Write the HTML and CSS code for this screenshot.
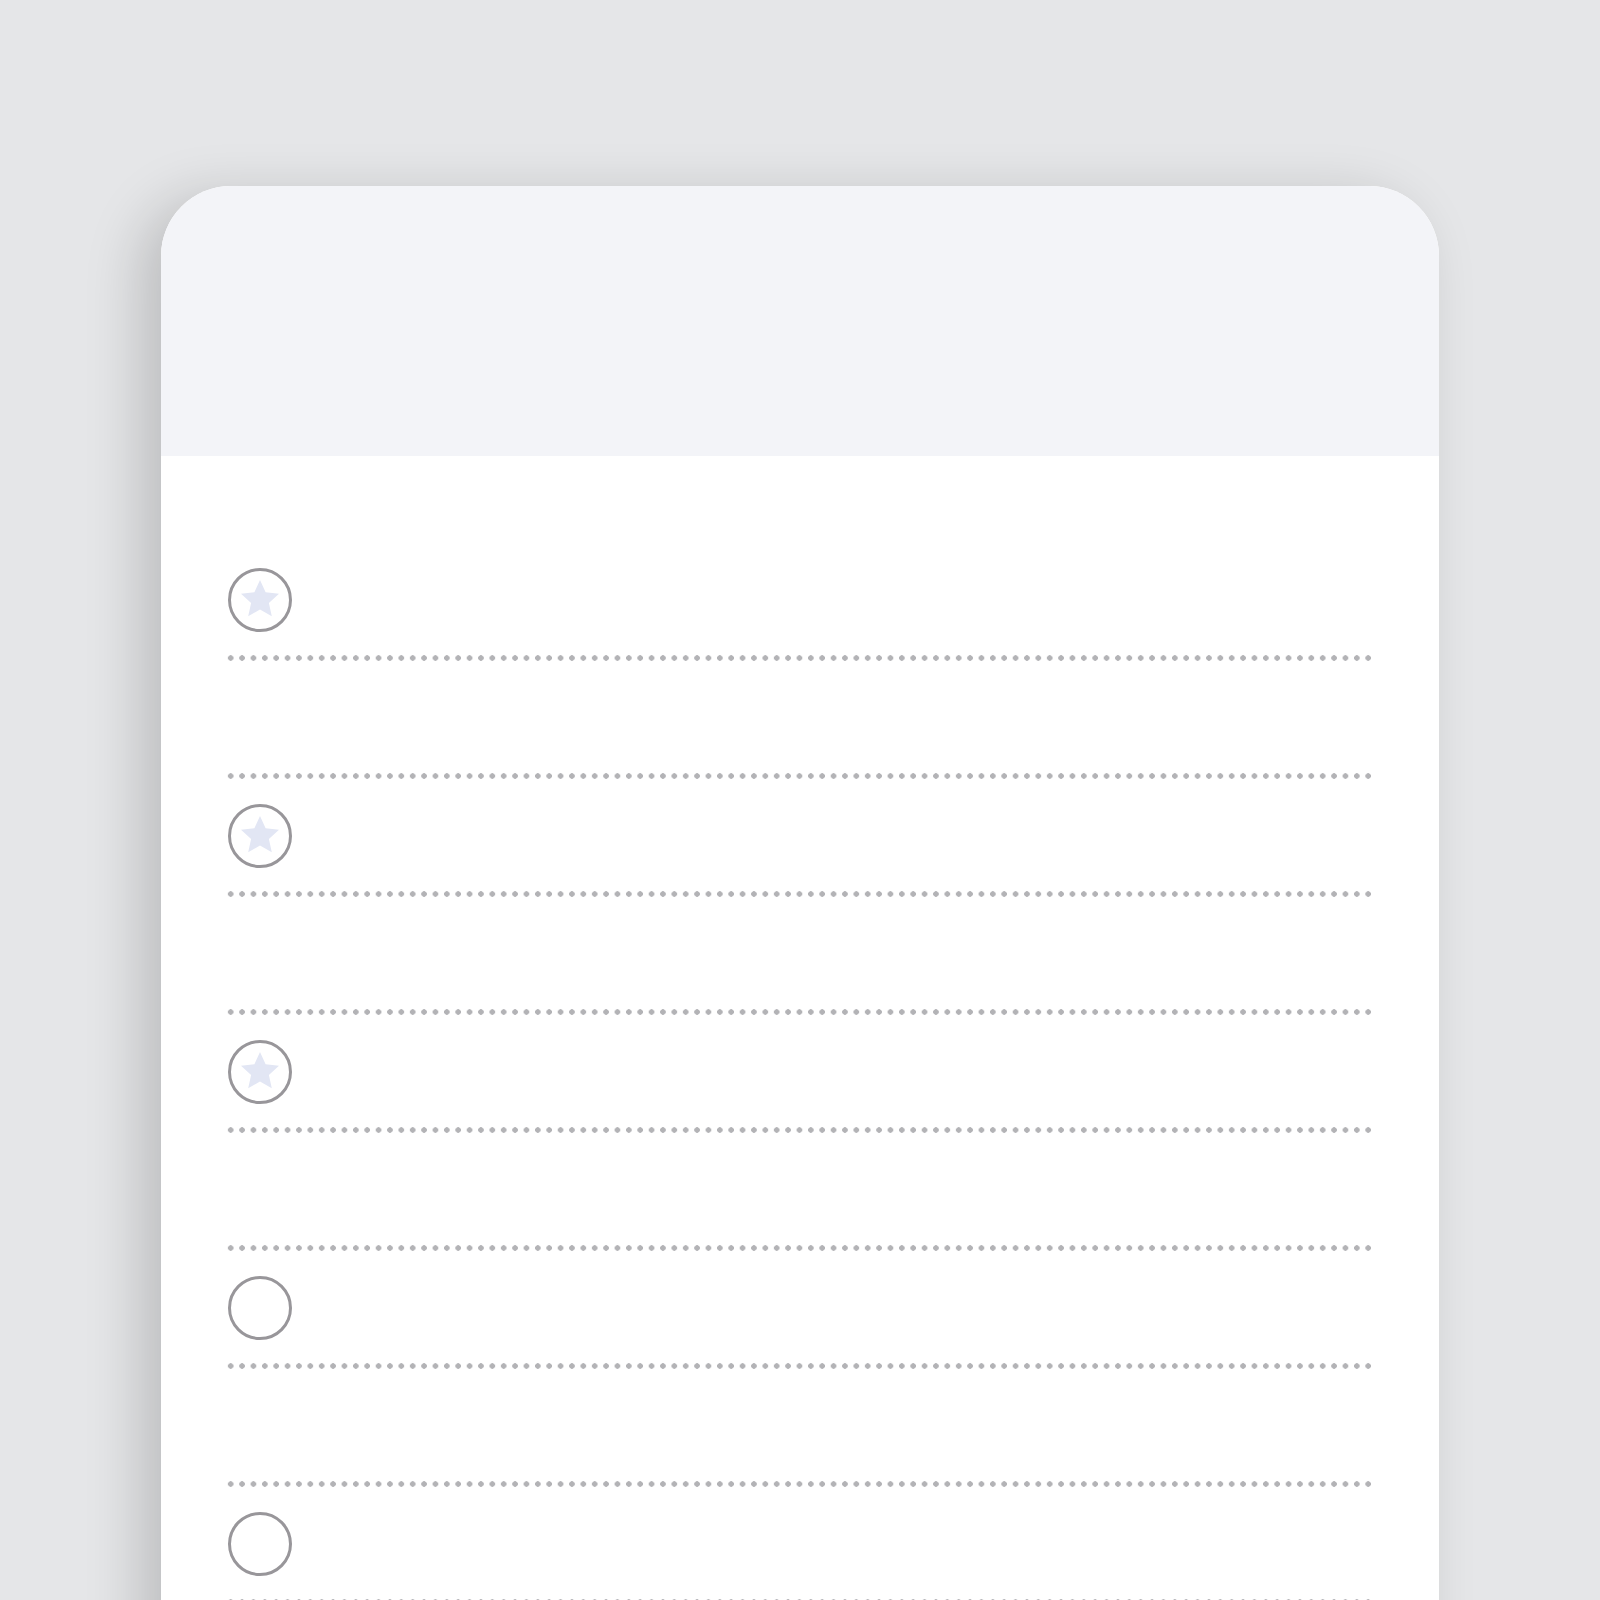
FILE: index.html
```html
<!DOCTYPE html>
<html lang="en">
<head>
<meta charset="utf-8">
<title>List</title>
<link rel="stylesheet" href="styles.css">
</head>
<body>
<div class="card">
  <div class="card-header"></div>
  <div class="card-body">
    <div class="row"><span class="check"><svg class="star" viewBox="-20 -20 40 40"><polygon points="0,-20 5.6,-7.7 19,-6.2 8.9,2.9 11.8,16.2 0,9.5 -11.8,16.2 -8.9,2.9 -19,-6.2 -5.6,-7.7"/></svg></span></div>
    <div class="row"></div>
    <div class="row"><span class="check"><svg class="star" viewBox="-20 -20 40 40"><polygon points="0,-20 5.6,-7.7 19,-6.2 8.9,2.9 11.8,16.2 0,9.5 -11.8,16.2 -8.9,2.9 -19,-6.2 -5.6,-7.7"/></svg></span></div>
    <div class="row"></div>
    <div class="row"><span class="check"><svg class="star" viewBox="-20 -20 40 40"><polygon points="0,-20 5.6,-7.7 19,-6.2 8.9,2.9 11.8,16.2 0,9.5 -11.8,16.2 -8.9,2.9 -19,-6.2 -5.6,-7.7"/></svg></span></div>
    <div class="row"></div>
    <div class="row"><span class="check"></span></div>
    <div class="row"></div>
    <div class="row"><span class="check"></span></div>
    <div class="row"></div>
    <div class="row"><span class="check"></span></div>
  </div>
</div>
</body>
</html>
```

FILE: styles.css
```css
html, body {
  margin: 0;
  padding: 0;
  background: #e5e6e8;
  font-family: "Liberation Sans", Arial, sans-serif;
}

body {
  padding: 186px 0 0 161px;
}

.card {
  width: 1278px;
  background: #ffffff;
  border-radius: 70px 70px 0 0;
  box-shadow: -20px 12px 56px rgba(0, 0, 0, 0.18);
  overflow: hidden;
}

.card-header {
  height: 270px;
  background: #f3f4f8;
}

.card-body {
  padding: 84px 67px 0 67px;
}

.row {
  height: 118px;
  display: flex;
  align-items: center;
  position: relative;
}

.row::after {
  content: "";
  position: absolute;
  left: -2.7px;
  width: 1149.4px;
  bottom: -3px;
  height: 6px;
  background-image: radial-gradient(circle, #b3b3b6 2.5px, transparent 3px);
  background-size: 11.38px 6px;
  background-position: 0 0;
  background-repeat: repeat-x;
}

.check {
  width: 58px;
  height: 58px;
  border: 3px solid #98969a;
  border-radius: 50%;
  display: flex;
  align-items: center;
  justify-content: center;
  box-sizing: content-box;
  margin-top: 1px;
}

.star {
  width: 40px;
  height: 40px;
  fill: #e2e6f4;
}
```
